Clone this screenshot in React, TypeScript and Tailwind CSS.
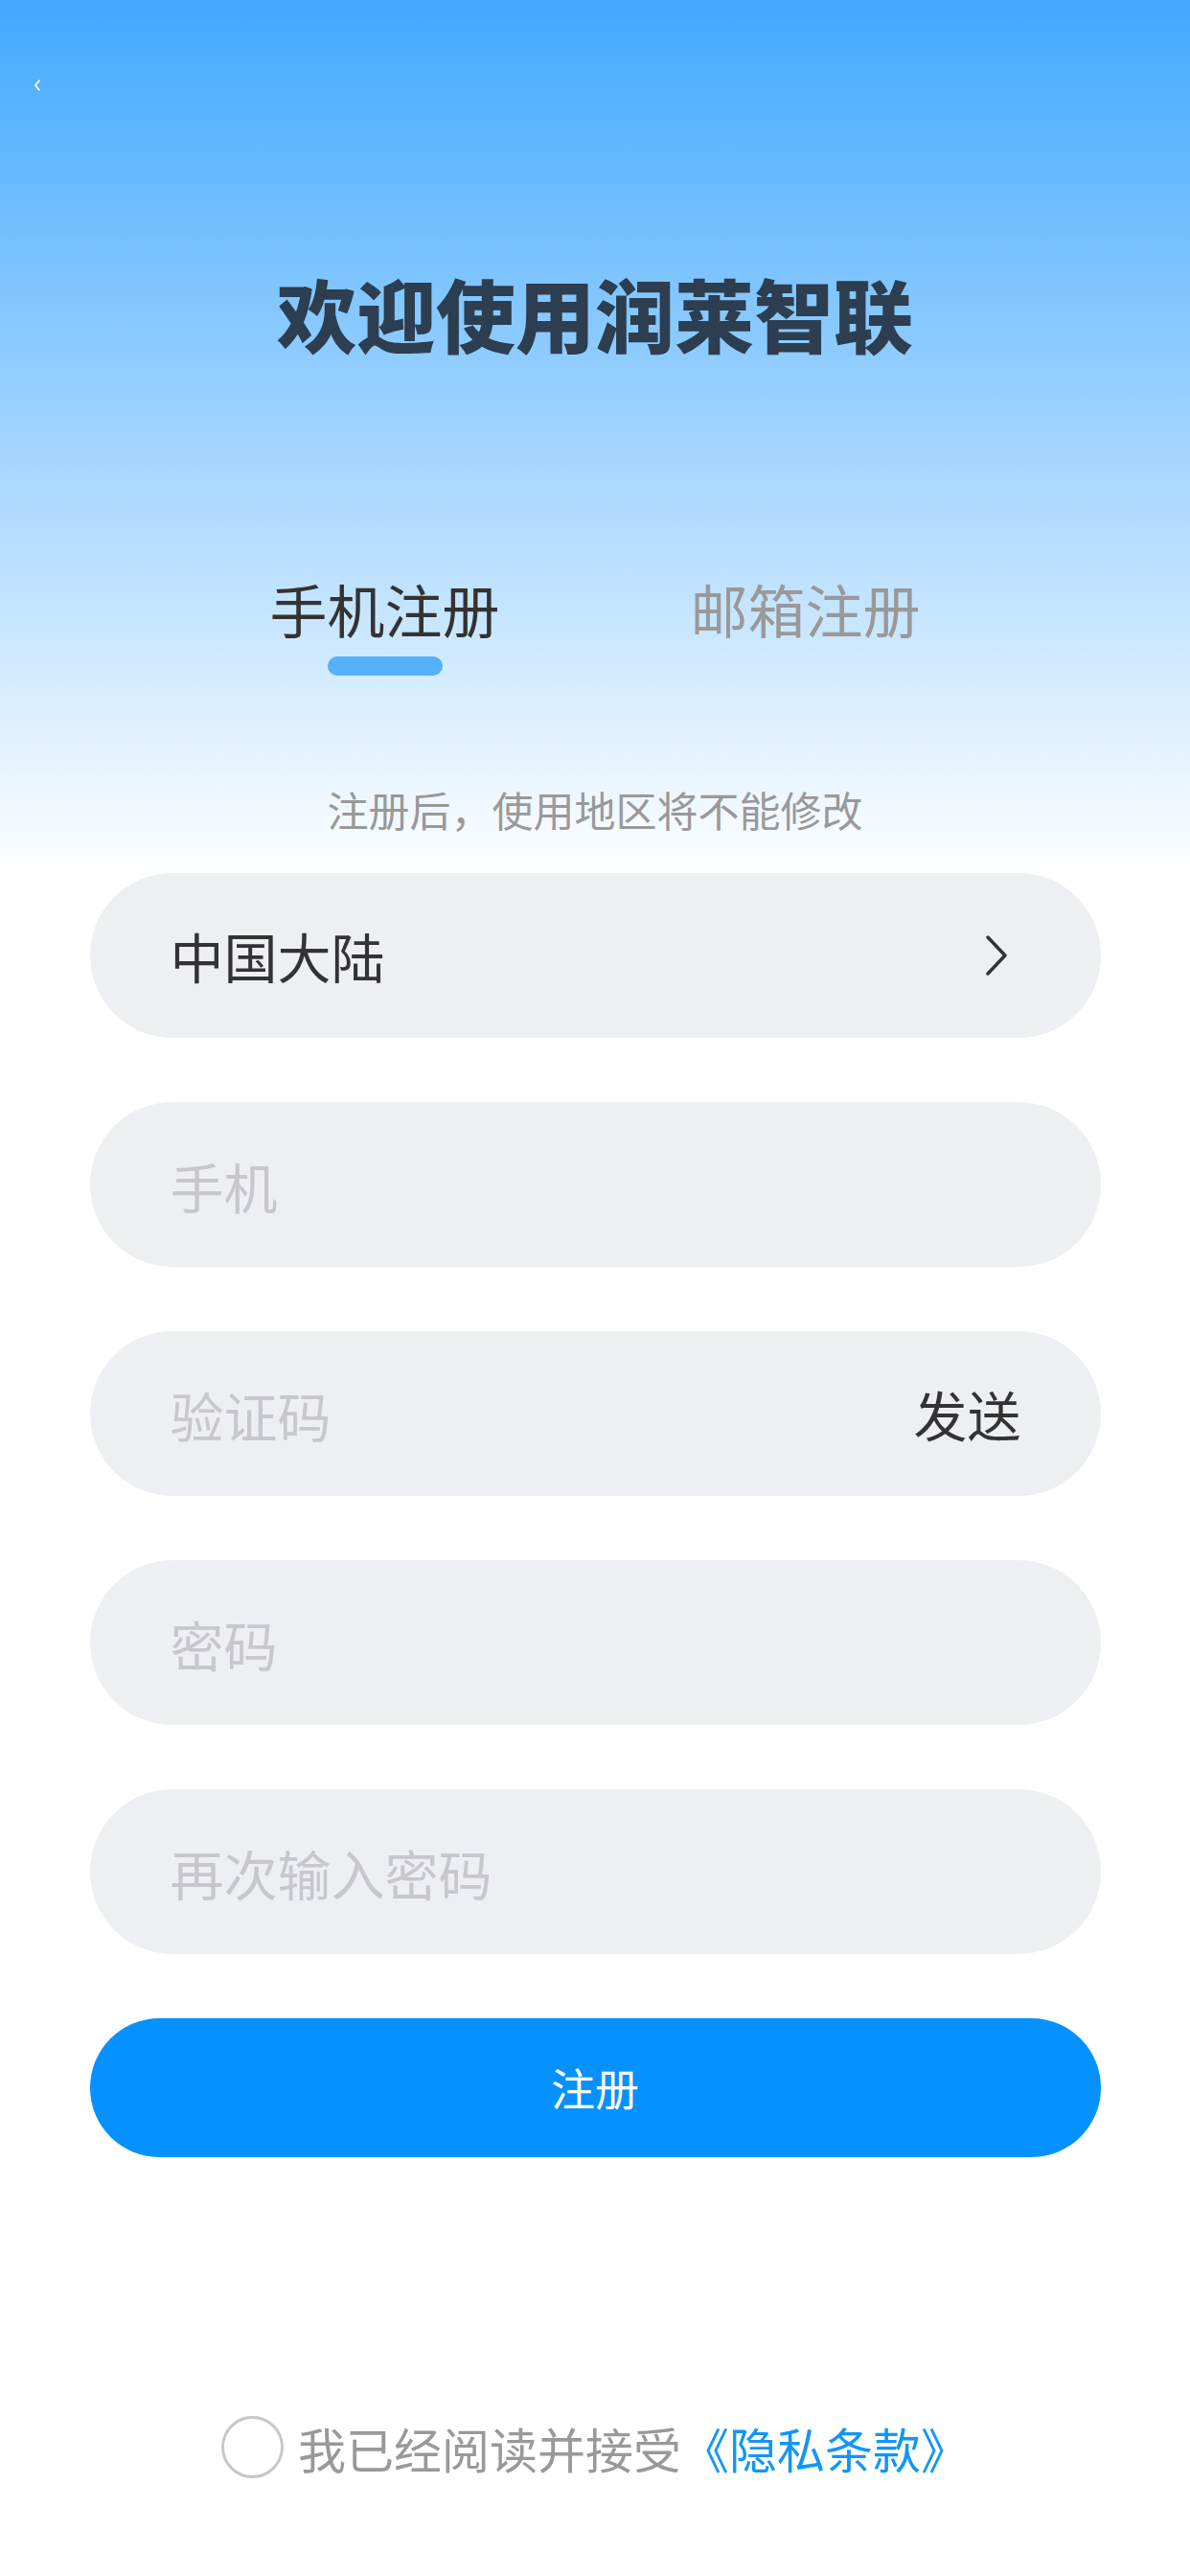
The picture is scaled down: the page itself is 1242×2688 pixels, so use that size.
import { useState } from "react"

const fields = [
  { key: "phone", placeholder: "手机", type: "tel" },
  { key: "code", placeholder: "验证码", type: "text", action: "发送" },
  { key: "password", placeholder: "密码", type: "password" },
  { key: "confirm", placeholder: "再次输入密码", type: "password" },
]

export default function App() {
  const [tab, setTab] = useState<"phone" | "email">("phone")
  const [agreed, setAgreed] = useState(false)

  return (
    <div className="w-[1242px] min-h-[2688px] flex flex-col items-center bg-[linear-gradient(180deg,#42a9ff_0px,#ffffff_915px)] font-['Noto_Sans_CJK_SC','Noto_Sans',sans-serif]">
      {/* back */}
      <div className="w-full h-[100px] pl-[35px] pt-[83px]">
        <svg width="8" height="12" viewBox="0 0 8 12" fill="none">
          <polyline points="6,1 2,6 6,11" stroke="#ffffff" strokeWidth="1.6" strokeLinecap="round" strokeLinejoin="round" />
        </svg>
      </div>

      <h1 className="mt-[185px] text-[83px] leading-[83px] font-black text-[#2c3e50]">
        欢迎使用润莱智联
      </h1>

      {/* tabs */}
      <div className="mt-[237px] flex justify-center gap-[199px]">
        <button onClick={() => setTab("phone")} className="flex flex-col items-center">
          <span className={`text-[60px] leading-[60px] ${tab === "phone" ? "text-[#333333]" : "text-[#999999]"}`}>手机注册</span>
          <span className={`mt-[20px] w-[120px] h-[20px] rounded-full ${tab === "phone" ? "bg-[#55b1fb]" : "bg-transparent"}`}></span>
        </button>
        <button onClick={() => setTab("email")} className="flex flex-col items-center">
          <span className={`text-[60px] leading-[60px] ${tab === "email" ? "text-[#333333]" : "text-[#999999]"}`}>邮箱注册</span>
          <span className={`mt-[20px] w-[120px] h-[20px] rounded-full ${tab === "email" ? "bg-[#55b1fb]" : "bg-transparent"}`}></span>
        </button>
      </div>

      <p className="mt-[118px] text-[43px] leading-[43px] text-[#999999]">注册后，使用地区将不能修改</p>

      {/* form */}
      <div className="mt-[45px] w-[1055px] flex flex-col gap-[67px]">
        <div className="h-[172px] rounded-full bg-[#eeeff3] flex items-center justify-between pl-[84px] pr-[96px]">
          <span className="text-[56px] leading-[56px] text-[#333333]">中国大陆</span>
          <svg width="26" height="44" viewBox="0 0 26 44" fill="none">
            <polyline points="4,3 22,22 4,41" stroke="#333333" strokeWidth="3.5" strokeLinecap="round" strokeLinejoin="round" />
          </svg>
        </div>

        {fields.map((f) => (
          <div key={f.key} className="h-[172px] rounded-full bg-[#eeeff3] flex items-center pl-[84px] pr-[83px]">
            <input
              type={f.type}
              placeholder={f.placeholder}
              className="flex-1 min-w-0 bg-transparent outline-none text-[56px] leading-[56px] text-[#333333] placeholder:text-[#c7c7cc]"
            />
            {f.action && <span className="text-[56px] leading-[56px] text-[#333333]">{f.action}</span>}
          </div>
        ))}

        <button className="h-[145px] pb-[4px] rounded-full bg-[#0591ff] text-white text-[46px] leading-[46px]">注册</button>
      </div>

      {/* agreement */}
      <div className="mt-[270px] flex items-center gap-[15px]">
        <button
          onClick={() => setAgreed(!agreed)}
          className={`w-[65px] h-[65px] rounded-full border-[3px] ${agreed ? "border-[#0591ff] bg-[#0591ff]" : "border-[#c7c7cc]"}`}
        ></button>
        <span className="text-[50px] leading-[50px] text-[#999999]">
          我已经阅读并接受<span className="text-[#1296f5]">《隐私条款》</span>
        </span>
      </div>
    </div>
  )
}
